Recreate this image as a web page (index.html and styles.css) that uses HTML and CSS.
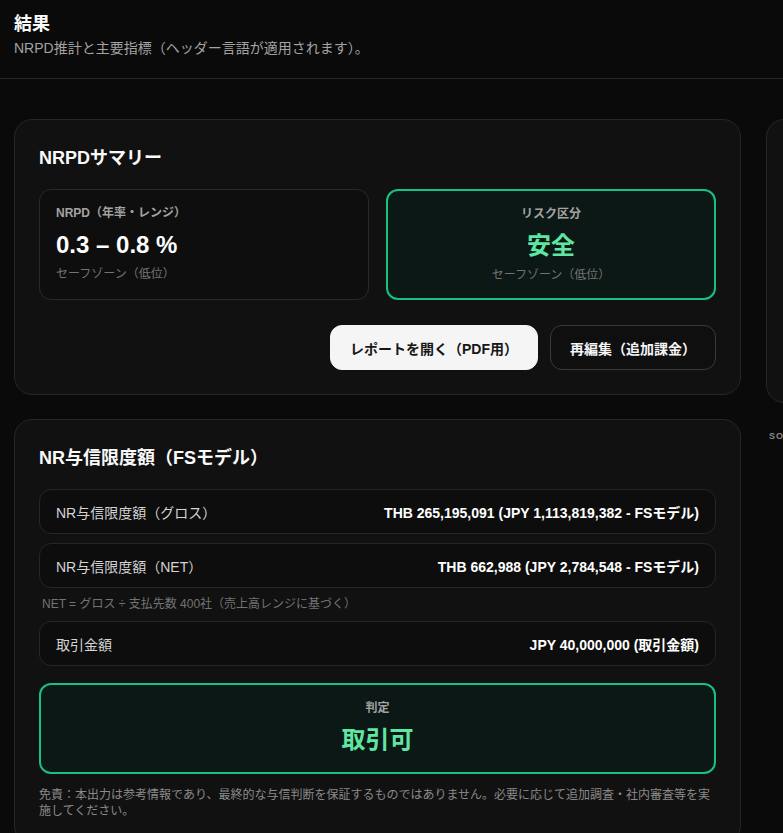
FILE: index.html
```html
<!DOCTYPE html>
<html lang="ja">
<head>
<meta charset="utf-8">
<title>結果</title>
<link rel="stylesheet" href="styles.css">
</head>
<body>
<header class="page-header">
  <h1 class="page-title">結果</h1>
  <p class="page-sub">NRPD推計と主要指標（ヘッダー言語が適用されます）。</p>
</header>
<main class="layout">
  <div class="col-main">
    <section class="card">
      <h2 class="card-title">NRPDサマリー</h2>
      <div class="stat-grid">
        <div class="stat">
          <div class="stat-label">NRPD（年率・レンジ）</div>
          <div class="stat-value">0.3 – 0.8 %</div>
          <div class="stat-sub">セーフゾーン（低位）</div>
        </div>
        <div class="stat stat-safe">
          <div class="stat-label">リスク区分</div>
          <div class="stat-value stat-green">安全</div>
          <div class="stat-sub">セーフゾーン（低位）</div>
        </div>
      </div>
      <div class="actions">
        <button class="btn btn-light">レポートを開く（PDF用）</button>
        <button class="btn btn-dark">再編集（追加課金）</button>
      </div>
    </section>
    <section class="card">
      <h2 class="card-title">NR与信限度額（FSモデル）</h2>
      <div class="rows">
        <div class="row"><span class="row-label">NR与信限度額（グロス）</span><span class="row-value">THB 265,195,091 (JPY 1,113,819,382 - FSモデル)</span></div>
        <div class="row"><span class="row-label">NR与信限度額（NET）</span><span class="row-value">THB 662,988 (JPY 2,784,548 - FSモデル)</span></div>
        <p class="note">NET = グロス ÷ 支払先数 400社（売上高レンジに基づく）</p>
        <div class="row"><span class="row-label">取引金額</span><span class="row-value">JPY 40,000,000 (取引金額)</span></div>
      </div>
      <div class="verdict">
        <div class="stat-label">判定</div>
        <div class="verdict-value">取引可</div>
      </div>
      <p class="disclaimer">免責：本出力は参考情報であり、最終的な与信判断を保証するものではありません。必要に応じて追加調査・社内審査等を実施してください。</p>
    </section>
  </div>
  <aside class="col-side">
    <section class="card side-card"></section>
    <p class="side-label">SOURCES</p>
  </aside>
</main>
</body>
</html>
```

FILE: styles.css
```css
* { box-sizing: border-box; }
html, body {
  margin: 0;
  padding: 0;
  background: #0a0a0a;
  overflow: hidden;
}
body {
  font-family: "Liberation Sans", "Noto Sans CJK JP", sans-serif;
  color: #f5f5f5;
  width: 783px;
}
.page-header {
  padding: 12px 14px 20px;
  border-bottom: 1px solid #262626;
}
.page-title {
  margin: 0 0 2px;
  font-size: 18px;
  line-height: 24px;
  font-weight: 700;
  color: #fafafa;
}
.page-sub {
  margin: 0;
  font-size: 14px;
  line-height: 20px;
  color: #a3a3a3;
}
.layout {
  display: grid;
  grid-template-columns: 727px 420px;
  gap: 25px;
  align-items: start;
  padding: 40px 14px;
}
.col-main {
  display: flex;
  flex-direction: column;
  gap: 24px;
}
.card {
  background: #111111;
  border: 1px solid #262626;
  border-radius: 18px;
  padding: 26px 24px 24px;
}
.card-title {
  margin: 0 0 19px;
  font-size: 18px;
  line-height: 24px;
  font-weight: 700;
  color: #fafafa;
}
.stat-grid {
  display: grid;
  grid-template-columns: 1fr 1fr;
  gap: 17px;
}
.stat {
  border: 1px solid #2a2a2a;
  border-radius: 12px;
  background: #0e0e0e;
  padding: 15px 16px 16px;
  height: 111px;
}
.stat-safe {
  border: 2px solid #17c184;
  background: #0b1815;
  text-align: center;
  padding-top: 15px;
}
.stat-label {
  font-size: 12px;
  line-height: 16px;
  font-weight: 700;
  color: #a3a3a3;
}
.stat-value {
  margin-top: 8px;
  font-size: 24px;
  line-height: 32px;
  font-weight: 700;
  color: #ffffff;
}
.stat-green {
  color: #5ee6a2;
}
.stat-sub {
  margin-top: 5px;
  font-size: 12px;
  line-height: 16px;
  color: #737373;
}
.actions {
  display: flex;
  justify-content: flex-end;
  gap: 12px;
  margin-top: 25px;
}
.btn {
  height: 45px;
  padding: 0 19px;
  border-radius: 12px;
  font-family: inherit;
  font-size: 14px;
  font-weight: 700;
  cursor: pointer;
}
.btn-light {
  background: #f5f5f5;
  color: #171717;
  border: 1px solid #f5f5f5;
}
.btn-dark {
  background: #0f0f0f;
  color: #f5f5f5;
  border: 1px solid #3a3a3a;
}
.rows {
  display: flex;
  flex-direction: column;
  gap: 9px;
}
.row {
  display: flex;
  justify-content: space-between;
  align-items: center;
  height: 45px;
  padding: 0 16px;
  border: 1px solid #262626;
  border-radius: 12px;
  background: #0d0d0d;
}
.row-label {
  font-size: 14px;
  color: #d4d4d4;
}
.row-value {
  font-size: 14px;
  font-weight: 700;
  color: #ffffff;
}
.note {
  margin: 0;
  padding-left: 3px;
  font-size: 12px;
  line-height: 15px;
  color: #737373;
}
.verdict {
  margin-top: 17px;
  height: 91px;
  border: 2px solid #17c184;
  border-radius: 12px;
  background: #0b1815;
  text-align: center;
  padding-top: 15px;
}
.verdict-value {
  margin-top: 8px;
  font-size: 24px;
  line-height: 32px;
  font-weight: 700;
  color: #5ee6a2;
}
.disclaimer {
  margin: 13px 0 0;
  font-size: 12px;
  line-height: 16px;
  color: #8a8a8a;
}
.col-side {
  display: flex;
  flex-direction: column;
}
.side-card {
  height: 284px;
}
.side-label {
  margin: 28px 0 0 3px;
  font-size: 9px;
  font-weight: 700;
  letter-spacing: 1px;
  color: #8a8a8a;
}
```
